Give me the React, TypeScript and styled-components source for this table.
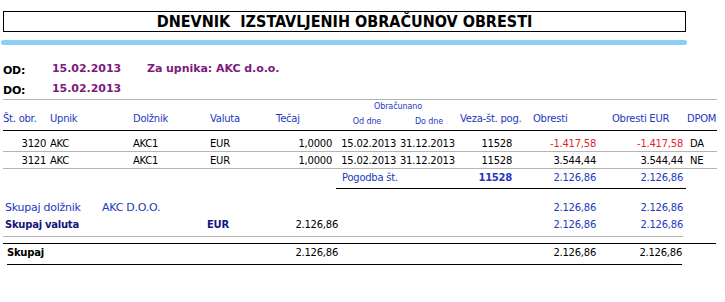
import React from "react";
import styled, { createGlobalStyle } from "styled-components";

const GlobalStyle = createGlobalStyle`
  html, body { margin: 0; padding: 0; background: #fff; }
  body {
    font-family: "DejaVu Sans", "Liberation Sans", sans-serif;
    font-size: 10px;
    color: #000;
  }
`;

const COLS = "44px 86px 77px 62px 64px 62px 62px 56px 84px 86px 31px";

const BLUE = "#2438c0";
const NAVY = "#15157a";
const PURPLE = "#7d1a7d";
const RED = "#e3262a";
const GRAY = "#b4b4b4";

const Page = styled.div`
  width: 725px;
  padding-top: 11px;
  letter-spacing: -0.25px;
`;

const TitleBox = styled.div`
  margin-left: 3px;
  width: 683px;
  height: 21px;
  box-sizing: border-box;
  border: 1px solid #000;
  display: flex;
  align-items: center;
  justify-content: center;
  font-family: "Liberation Sans Narrow", "DejaVu Sans Condensed", "Liberation Sans", sans-serif;
  font-stretch: condensed;
  font-weight: bold;
  font-size: 16px;
  letter-spacing: 0;
  white-space: pre;
`;

const BlueBar = styled.div`
  margin: 8px 0 0 1px;
  width: 686px;
  height: 5px;
  border-radius: 3px;
  background: #8ccff3;
`;

const Info = styled.div`
  margin: 16px 0 0 3px;
  width: 714px;
  display: grid;
  grid-template-columns: 49px 95px 1fr;
  grid-auto-rows: 18px;
  row-gap: 2px;
  border-bottom: 1px solid ${GRAY};
  font-weight: bold;
  font-size: 11px;
`;

const InfoLabel = styled.div`
  align-self: end;
  line-height: 16px;
  color: #000;
`;

const InfoValue = styled.div`
  align-self: start;
  line-height: 16px;
  color: ${PURPLE};
  letter-spacing: -0.05px;
`;

const Table = styled.div`
  margin-left: 3px;
  width: 714px;
`;

const HeadGrid = styled.div`
  display: grid;
  grid-template-columns: ${COLS};
  grid-template-rows: 12px 18px;
  border-bottom: 1px solid #000;
  color: ${BLUE};
`;

const HeadCell = styled.div<{ $col: number; $align?: string; $pl?: number; $pr?: number }>`
  grid-column: ${(p) => p.$col};
  grid-row: 1 / 3;
  align-self: end;
  line-height: 14px;
  padding: 0 ${(p) => p.$pr ?? 0}px 4px ${(p) => p.$pl ?? 0}px;
  text-align: ${(p) => p.$align ?? "left"};
  white-space: nowrap;
`;

const SmallHead = styled.div<{ $col: string; $row: number }>`
  grid-column: ${(p) => p.$col};
  grid-row: ${(p) => p.$row};
  font-size: 8px;
  letter-spacing: -0.1px;
  line-height: 10px;
  text-align: center;
  padding-top: ${(p) => (p.$row === 1 ? 2 : 5)}px;
`;

const Body = styled.div`
  padding-top: 4px;
`;

const Row = styled.div`
  display: grid;
  grid-template-columns: ${COLS};
  line-height: 14px;
  padding: 2px 0 0;
  border-bottom: 1px solid ${GRAY};
`;

const Cell = styled.div<{ $align?: string; $pl?: number; $pr?: number; $color?: string; $bold?: boolean; $size?: number }>`
  text-align: ${(p) => p.$align ?? "left"};
  padding: 0 ${(p) => p.$pr ?? 0}px 0 ${(p) => p.$pl ?? 0}px;
  color: ${(p) => p.$color ?? "#000"};
  font-weight: ${(p) => (p.$bold ? "bold" : "normal")};
  ${(p) => (p.$size ? `font-size: ${p.$size}px;` : "")}
  white-space: nowrap;
`;

const ContractRow = styled.div`
  display: grid;
  grid-template-columns: ${COLS};
  line-height: 14px;
`;

const ContractBox = styled.div`
  grid-column: 6 / 11;
  display: grid;
  grid-template-columns: 124px 56px 84px 86px;
  padding: 2px 0 3px;
  border-bottom: 1px solid #000;
  color: ${BLUE};
`;

const SumBlock = styled.div`
  margin: 10px 0 0 3px;
  width: 680px;
  padding-bottom: 3px;
  border-bottom: 1px solid ${GRAY};
`;

const SumRow = styled.div<{ $size?: number; $color: string }>`
  display: grid;
  grid-template-columns: 97px 107px 53px 80px 176px 84px 83px;
  line-height: 17px;
  font-size: ${(p) => p.$size ?? 10}px;
  color: ${(p) => p.$color};
`;

const Divider = styled.div`
  margin: 6px 0 0 3px;
  width: 713px;
  border-top: 1px solid #000;
`;

const GrandRow = styled.div`
  margin-left: 7px;
  width: 675px;
  display: grid;
  grid-template-columns: 93px 107px 53px 80px 176px 84px 82px;
  line-height: 14px;
  padding: 2px 0 4px;
  border-bottom: 1px solid #000;
`;

type Line = {
  nr: string;
  upnik: string;
  dolznik: string;
  valuta: string;
  tecaj: string;
  od: string;
  do: string;
  veza: string;
  obresti: string;
  eur: string;
  dpom: string;
};

const lines: Line[] = [
  { nr: "3120", upnik: "AKC", dolznik: "AKC1", valuta: "EUR", tecaj: "1,0000", od: "15.02.2013", do: "31.12.2013", veza: "11528", obresti: "-1.417,58", eur: "-1.417,58", dpom: "DA" },
  { nr: "3121", upnik: "AKC", dolznik: "AKC1", valuta: "EUR", tecaj: "1,0000", od: "15.02.2013", do: "31.12.2013", veza: "11528", obresti: "3.544,44", eur: "3.544,44", dpom: "NE" },
];

export default function App() {
  return (
    <Page>
      <GlobalStyle />
      <TitleBox>{"DNEVNIK  IZSTAVLJENIH OBRAČUNOV OBRESTI"}</TitleBox>
      <BlueBar />
      <Info>
        <InfoLabel>OD:</InfoLabel>
        <InfoValue>15.02.2013</InfoValue>
        <InfoValue>Za upnika: AKC d.o.o.</InfoValue>
        <InfoLabel>DO:</InfoLabel>
        <InfoValue>15.02.2013</InfoValue>
        <div />
      </Info>
      <Table>
        <HeadGrid>
          <HeadCell $col={1}>Št. obr.</HeadCell>
          <HeadCell $col={2} $pl={3}>Upnik</HeadCell>
          <HeadCell $col={3}>Dolžnik</HeadCell>
          <HeadCell $col={4}>Valuta</HeadCell>
          <HeadCell $col={5} $pl={4}>Tečaj</HeadCell>
          <SmallHead $col="6 / 8" $row={1}>Obračunano</SmallHead>
          <SmallHead $col="6" $row={2}>Od dne</SmallHead>
          <SmallHead $col="7" $row={2}>Do dne</SmallHead>
          <HeadCell $col={8} $align="right" $pr={1}>Veza-št. pog.</HeadCell>
          <HeadCell $col={9} $pl={17}>Obresti</HeadCell>
          <HeadCell $col={10} $pl={12}>Obresti EUR</HeadCell>
          <HeadCell $col={11} $pl={1}>DPOM</HeadCell>
        </HeadGrid>
        <Body>
          {lines.map((l) => {
            const neg = l.obresti.startsWith("-");
            return (
              <Row key={l.nr}>
                <Cell $align="right" $pr={1}>{l.nr}</Cell>
                <Cell $pl={3}>{l.upnik}</Cell>
                <Cell>{l.dolznik}</Cell>
                <Cell>{l.valuta}</Cell>
                <Cell $align="right" $pr={4}>{l.tecaj}</Cell>
                <Cell $align="right" $pr={2}>{l.od}</Cell>
                <Cell $pl={2}>{l.do}</Cell>
                <Cell $align="right" $pr={4}>{l.veza}</Cell>
                <Cell $align="right" $pr={4} $color={neg ? RED : "#000"}>{l.obresti}</Cell>
                <Cell $align="right" $pr={3} $color={neg ? RED : "#000"}>{l.eur}</Cell>
                <Cell $pl={4}>{l.dpom}</Cell>
              </Row>
            );
          })}
          <ContractRow>
            <ContractBox>
              <Cell $pl={6} $color={BLUE}>Pogodba št.</Cell>
              <Cell $align="right" $pr={4} $color={BLUE} $bold>11528</Cell>
              <Cell $align="right" $pr={4} $color={BLUE}>2.126,86</Cell>
              <Cell $align="right" $pr={3} $color={BLUE}>2.126,86</Cell>
            </ContractBox>
          </ContractRow>
        </Body>
      </Table>
      <SumBlock>
        <SumRow $size={11} $color={BLUE}>
          <Cell $pl={2} $color={BLUE}>Skupaj dolžnik</Cell>
          <Cell $pl={2} $color={BLUE}>AKC D.O.O.</Cell>
          <div />
          <div />
          <div />
          <Cell $align="right" $pr={4} $color={BLUE} $size={10}>2.126,86</Cell>
          <Cell $align="right" $color={BLUE} $size={10}>2.126,86</Cell>
        </SumRow>
        <SumRow $color={NAVY}>
          <Cell $pl={2} $color={NAVY} $bold>Skupaj valuta</Cell>
          <div />
          <Cell $color={NAVY} $bold>EUR</Cell>
          <Cell $align="right" $pr={2}>2.126,86</Cell>
          <div />
          <Cell $align="right" $pr={4} $color={BLUE}>2.126,86</Cell>
          <Cell $align="right" $color={BLUE}>2.126,86</Cell>
        </SumRow>
      </SumBlock>
      <Divider />
      <GrandRow>
        <Cell $bold>Skupaj</Cell>
        <div />
        <div />
        <Cell $align="right" $pr={2}>2.126,86</Cell>
        <div />
        <Cell $align="right" $pr={4}>2.126,86</Cell>
        <Cell $align="right">2.126,86</Cell>
      </GrandRow>
    </Page>
  );
}
